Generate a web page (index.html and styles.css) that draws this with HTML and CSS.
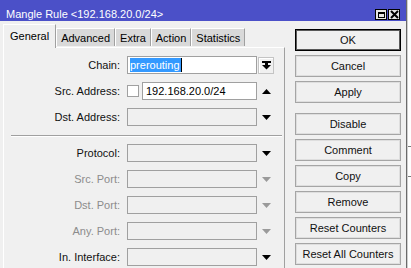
FILE: index.html
```html
<!DOCTYPE html>
<html lang="en">
<head>
	<meta charset="UTF-8">
	<title>Mangle Rule</title>
	<link rel="stylesheet" href="styles.css">
</head>
<body>
	<div class="screen">
		<div class="window">
			<div class="titlebar">
				<span class="title">Mangle Rule &lt;192.168.20.0/24&gt;</span>
				<div class="title-buttons">
					<span class="title-btn"><span class="max-icon"></span></span>
					<span class="title-btn">
						<svg width="9" height="9" viewBox="0 0 9 9"><path d="M1 1 L8 8 M8 1 L1 8" stroke="#000" stroke-width="2"/></svg>
					</span>
				</div>
			</div>

			<div class="content">
				<div class="tabs-area">
					<div class="tabs">
						<div class="tab active">General</div>
						<div class="tab">Advanced</div>
						<div class="tab">Extra</div>
						<div class="tab">Action</div>
						<div class="tab">Statistics</div>
					</div>

					<div class="panel">
						<div class="row">
							<div class="label">Chain:</div>
							<div class="field filled"><span class="sel">prerouting</span><span class="caret"></span></div>
							<div class="side">
								<span class="drop-btn">
									<svg width="9" height="9" viewBox="0 0 9 9"><rect x="0" y="0" width="9" height="2"/><rect x="3" y="2" width="3" height="2"/><polygon points="0,4 9,4 4.5,8.5"/></svg>
								</span>
							</div>
						</div>
						<div class="row">
							<div class="label">Src. Address:</div>
							<span class="check"></span>
							<div class="field filled short"><span class="value">192.168.20.0/24</span></div>
							<div class="side">
								<svg width="9" height="5" viewBox="0 0 9 5"><polygon points="0,5 9,5 4.5,0"/></svg>
							</div>
						</div>
						<div class="row">
							<div class="label">Dst. Address:</div>
							<div class="field"></div>
							<div class="side">
								<svg width="9" height="5" viewBox="0 0 9 5"><polygon points="0,0 9,0 4.5,5"/></svg>
							</div>
						</div>

						<div class="separator"></div>

						<div class="row">
							<div class="label">Protocol:</div>
							<div class="field"></div>
							<div class="side">
								<svg width="9" height="5" viewBox="0 0 9 5"><polygon points="0,0 9,0 4.5,5"/></svg>
							</div>
						</div>
						<div class="row disabled">
							<div class="label">Src. Port:</div>
							<div class="field"></div>
							<div class="side">
								<svg width="9" height="5" viewBox="0 0 9 5"><polygon points="0,0 9,0 4.5,5"/></svg>
							</div>
						</div>
						<div class="row disabled">
							<div class="label">Dst. Port:</div>
							<div class="field"></div>
							<div class="side">
								<svg width="9" height="5" viewBox="0 0 9 5"><polygon points="0,0 9,0 4.5,5"/></svg>
							</div>
						</div>
						<div class="row disabled">
							<div class="label">Any. Port:</div>
							<div class="field"></div>
							<div class="side">
								<svg width="9" height="5" viewBox="0 0 9 5"><polygon points="0,0 9,0 4.5,5"/></svg>
							</div>
						</div>
						<div class="row">
							<div class="label">In. Interface:</div>
							<div class="field"></div>
							<div class="side">
								<svg width="9" height="5" viewBox="0 0 9 5"><polygon points="0,0 9,0 4.5,5"/></svg>
							</div>
						</div>
					</div>
				</div>

				<div class="buttons">
					<div class="btn default">OK</div>
					<div class="btn">Cancel</div>
					<div class="btn">Apply</div>
					<div class="btn spaced">Disable</div>
					<div class="btn">Comment</div>
					<div class="btn">Copy</div>
					<div class="btn">Remove</div>
					<div class="btn">Reset Counters</div>
					<div class="btn">Reset All Counters</div>
				</div>
			</div>
		</div>

		<div class="behind">
			<div class="behind-line"></div>
			<div class="behind-line second"></div>
		</div>
	</div>
</body>
</html>
```

FILE: styles.css
```css
body {
	margin: 0;
	background: #fff;
	font-family: "Liberation Sans", Arial, sans-serif;
	font-size: 11px;
	line-height: 13px;
	color: #000;
}

.screen {
	display: flex;
	height: 268px;
	overflow: hidden;
}

.window {
	width: 406px;
	flex: none;
	background: #f0f0f0;
	border-right: 1px solid #6b6b6b;
}

/* title bar */
.titlebar {
	height: 21px;
	box-sizing: border-box;
	padding: 8px 6px 0 6px;
	background: #4b50c8;
	color: #fff;
	display: flex;
	align-items: flex-start;
	justify-content: space-between;
}

.title-buttons {
	display: flex;
	gap: 1px;
	margin-top: 1px;
}

.title-btn {
	width: 12px;
	height: 11px;
	box-sizing: border-box;
	border: 1px solid #000;
	background: #e6e6e6;
	display: flex;
	align-items: center;
	justify-content: center;
}

.max-icon {
	width: 7px;
	height: 6px;
	box-sizing: border-box;
	border: 1px solid #000;
	border-top-width: 2px;
}

/* body */
.content {
	display: flex;
}

.tabs-area {
	margin-left: 3px;
	width: 282px;
}

.tabs {
	height: 26px;
	display: flex;
	align-items: flex-end;
}

.tab {
	height: 18px;
	box-sizing: border-box;
	padding: 3px 4px 1px 4px;
	margin-bottom: 1px;
	background: #d9d9d9;
	border: 1px solid #fff;
	border-right-color: #a0a0a0;
	border-bottom: none;
}

.tab.active {
	position: relative;
	z-index: 1;
	height: 24px;
	padding: 5px 6px 0 6px;
	margin-bottom: -1px;
	background: #f0f0f0;
}

.panel {
	height: 240px;
	padding-top: 4px;
	border-top: 1px solid #fff;
	border-left: 1px solid #fff;
	border-right: 1px solid #a0a0a0;
}

.row {
	display: flex;
	align-items: center;
	height: 26px;
}

.label {
	width: 116px;
	margin-right: 7px;
	text-align: right;
	color: #111;
}

.disabled .label {
	color: #8c8c8c;
}

.disabled svg {
	fill: #9a9a9a;
}

.field {
	width: 130px;
	height: 18px;
	box-sizing: border-box;
	border: 1px solid #a0a0a0;
	background: #f0f0f0;
	display: flex;
	align-items: center;
	padding-left: 2px;
}

.field.filled {
	background: #fff;
}

.field.short {
	width: 115px;
	padding-left: 3px;
}

.sel {
	background: #3399ff;
	color: #fff;
	line-height: 14px;
	padding-right: 1px;
}

.caret {
	width: 1px;
	height: 14px;
	background: #000;
}

.check {
	width: 12px;
	height: 12px;
	box-sizing: border-box;
	border: 1px solid #a0a0a0;
	background: #fff;
	margin-right: 3px;
}

.side {
	width: 16px;
	margin-left: 1px;
	display: flex;
	justify-content: center;
	align-items: center;
}

.drop-btn {
	width: 16px;
	height: 17px;
	box-sizing: border-box;
	border: 1px solid #c4c4c4;
	box-shadow: inset 1px 1px 0 #fff;
	background: #f0f0f0;
	display: flex;
	align-items: center;
	justify-content: center;
}

.separator {
	margin: 5px 2px 3px 7px;
	border-top: 1px solid #a0a0a0;
	border-bottom: 1px solid #fff;
}

/* right button column */
.buttons {
	margin-left: 10px;
	padding-top: 8px;
	width: 106px;
	display: flex;
	flex-direction: column;
	gap: 4px;
}

.btn {
	height: 22px;
	box-sizing: border-box;
	border: 1px solid #a5a5a5;
	box-shadow: inset 0 0 0 1px #dedede;
	background: #f0f0f0;
	text-align: center;
	line-height: 20px;
	color: #111;
}

.btn.default {
	border-color: #000;
	box-shadow: inset 0 0 0 1px #5a5a5a;
}

.btn.spaced {
	margin-top: 6px;
}

/* window behind the dialog */
.behind {
	flex: 1;
	padding-top: 146px;
	border-left: 1px solid #cfcfcf;
}

.behind-line {
	border-top: 1px solid #7a7a7a;
}

.behind-line.second {
	margin-top: 29px;
}
```
